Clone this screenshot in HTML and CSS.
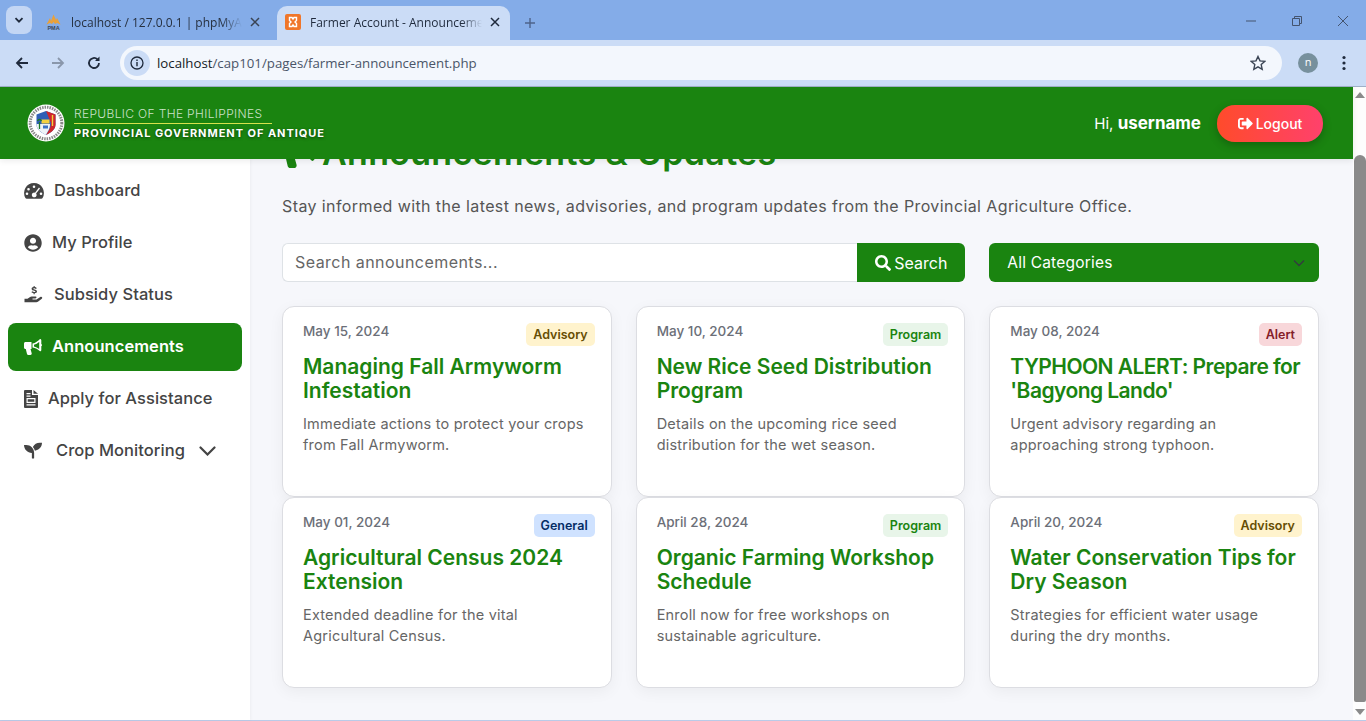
FILE: index.html
```html
<!DOCTYPE html>
<html lang="en">
<head>
  <meta charset="UTF-8">
  <title>Farmer Account - Announcements</title>
  <link rel="stylesheet" href="styles.css">
</head>
<body>
  <div class="browser">
    <div class="tabstrip">
      <button class="tab-menu"><svg width="12" height="12" viewBox="0 0 12 12"><path d="M2.500 4.200 6 7.700l3.500-3.500" fill="none" stroke="#1f2a3c" stroke-width="1.800"/></svg></button>
      <div class="tab">
        <svg class="favicon" width="17" height="16" viewBox="0 0 17 16"><path d="M1.500 10.500 5 4l1 3 2.500-6.500L11 6l1-2 3.500 6.500-3.500-1.500-2 1-1.500-2-1.500 2-2-1z" fill="#e9a13b"/><text x="8.500" y="15.500" text-anchor="middle" class="pma">PMA</text></svg>
        <span class="tab-title">localhost / 127.0.0.1 | phpMyAdmin</span>
        <svg class="tab-x" width="10" height="10" viewBox="0 0 10 10"><path d="m1 1 8 8M9 1 1 9" stroke="#3a4454" stroke-width="1.500"/></svg>
      </div>
      <div class="tab tab-active">
        <svg class="favicon" width="16" height="16" viewBox="0 0 16 16"><rect width="16" height="16" rx="2" fill="#f0762a"/><path d="M4.500 3.500h2.500l1 1.500 1-1.500h2.500v3l-1.500 1.500 1.500 1.500v3H9L8 11l-1 1.500H4.500v-3L6 8 4.500 6.500z" fill="none" stroke="#fff" stroke-width="1.400"/></svg>
        <span class="tab-title">Farmer Account - Announcements</span>
        <svg class="tab-x" width="10" height="10" viewBox="0 0 10 10"><path d="m1 1 8 8M9 1 1 9" stroke="#1f2a3c" stroke-width="1.500"/></svg>
      </div>
      <svg class="tab-new" width="12" height="12" viewBox="0 0 12 12"><path d="M6 1v10M1 6h10" stroke="#4d638a" stroke-width="1.400"/></svg>
      <div class="win-controls">
        <svg width="12" height="12" viewBox="0 0 12 12"><path d="M1 6h10" stroke="#44546e" stroke-width="1"/></svg>
        <svg width="12" height="12" viewBox="0 0 12 12"><path d="M1.500 3.500h7v7h-7zM3.500 3.500v-2h7v7h-2" fill="none" stroke="#44546e" stroke-width="1"/></svg>
        <svg width="12" height="12" viewBox="0 0 12 12"><path d="m1 1 10 10M11 1 1 11" stroke="#44546e" stroke-width="1"/></svg>
      </div>
    </div>
    <div class="toolbar">
      <svg class="tool" width="16" height="16" viewBox="0 0 16 16"><path d="M14 8H3M8 3 3 8l5 5" fill="none" stroke="#1f2a3c" stroke-width="1.800"/></svg>
      <svg class="tool" width="16" height="16" viewBox="0 0 16 16"><path d="M2 8h11M8 3l5 5-5 5" fill="none" stroke="#8a97ab" stroke-width="1.800"/></svg>
      <svg class="tool" width="16" height="16" viewBox="0 0 16 16"><path d="M13 8a5 5 0 1 1-1.500-3.600" fill="none" stroke="#1f2a3c" stroke-width="1.800"/><path d="M13.500 1.500v4.500H9z" fill="#1f2a3c"/></svg>
      <div class="omnibox">
        <span class="site-chip"><svg width="14" height="14" viewBox="0 0 14 14"><circle cx="7" cy="7" r="6" fill="none" stroke="#1f2a3c" stroke-width="1.300"/><path d="M7 6v4.300M7 3.500v1.500" stroke="#1f2a3c" stroke-width="1.400"/></svg></span>
        <span class="url"><b>localhost</b>/cap101/pages/farmer-announcement.php</span>
        <svg class="star" width="16" height="16" viewBox="0 0 16 16"><path d="m8 1.500 2 4.400 4.700.5-3.500 3.200 1 4.700L8 11.900l-4.200 2.400 1-4.700L1.300 6.400 6 5.900z" fill="none" stroke="#3a4454" stroke-width="1.400"/></svg>
      </div>
      <span class="avatar">n</span>
      <svg class="kebab" width="4" height="16" viewBox="0 0 4 16"><circle cx="2" cy="2.500" r="1.600" fill="#1f2a3c"/><circle cx="2" cy="8" r="1.600" fill="#1f2a3c"/><circle cx="2" cy="13.500" r="1.600" fill="#1f2a3c"/></svg>
    </div>
  </div>

  <div class="viewport">
    <div class="page">
      <header class="topbar">
        <svg class="seal" width="38" height="38" viewBox="0 0 38 38">
          <circle cx="19" cy="19" r="18.500" fill="#fff"/>
          <circle cx="19" cy="19" r="15.800" fill="none" stroke="#555" stroke-width="3" stroke-dasharray="1.500 1" opacity=".7"/>
          <path d="M9.500 10.500 19 7l9.500 3.500v10c0 5-4.500 8-9.500 10.500-5-2.500-9.500-5.500-9.500-10.500z" fill="#2f5fb5"/>
          <path d="M19 7l9.500 3.500v10c0 5-4.500 8-9.500 10.500 3-5 5-7 5-12z" fill="#d0262c"/>
          <path d="M9.500 20H23c0 5-2 7-4 11-5-2.500-9.500-5.500-9.500-11z" fill="#eef2f7"/>
          <path d="M14.500 15.500h8v4h-8z" fill="#f4d03f"/>
          <path d="M16 21.500h5v3h-5z" fill="#3b72c4"/>
          <path d="M12.500 18v7M10.500 17c1-2 3-2 4 0" stroke="#1e7a2a" stroke-width="1.300" fill="none"/>
          <path d="M25.500 11v11" stroke="#f4d03f" stroke-width="1.400"/>
        </svg>
        <div class="brand">
          <span class="brand-top">REPUBLIC OF THE PHILIPPINES</span>
          <span class="brand-bottom">PROVINCIAL GOVERNMENT OF ANTIQUE</span>
        </div>
        <div class="topbar-right">
          <span class="hello">Hi, <b>username</b></span>
          <a class="logout" href="#">
            <svg width="15" height="15" viewBox="0 0 512 512"><path fill="#fff" d="M497 273 329 441c-15 15-41 4.500-41-17v-96H152c-13.300 0-24-10.700-24-24v-96c0-13.300 10.700-24 24-24h136V88c0-21.400 25.900-32 41-17l168 168c9.300 9.400 9.300 24.600 0 34zM192 436v-40c0-6.600-5.400-12-12-12H96c-17.700 0-32-14.300-32-32V160c0-17.700 14.300-32 32-32h84c6.600 0 12-5.400 12-12V76c0-6.600-5.400-12-12-12H96c-53 0-96 43-96 96v192c0 53 43 96 96 96h84c6.600 0 12-5.400 12-12z"/></svg>
            Logout
          </a>
        </div>
      </header>

      <div class="layout">
        <nav class="sidebar">
          <a class="nav-item" href="#">
            <svg class="nav-icon w20" viewBox="0 0 20 18"><path fill-rule="evenodd" d="M10 1a10 10 0 0 0-8.600 15c.3.500.8.700 1.300.7h14.600c.5 0 1-.2 1.300-.7A10 10 0 0 0 10 1zm0 2.500a1.300 1.300 0 1 1 0 2.600 1.300 1.300 0 0 1 0-2.600zM4.500 6a1.300 1.300 0 1 1 0 2.600 1.300 1.300 0 0 1 0-2.600zM3 10.500a1.300 1.300 0 1 1 0 2.600 1.300 1.300 0 0 1 0-2.600zm14 0a1.300 1.300 0 1 1 0 2.600 1.300 1.300 0 0 1 0-2.600zM15 5.600l1 .8-3.900 5.100a2.400 2.400 0 1 1-1.100-.8z"/></svg>
            <span>Dashboard</span>
          </a>
          <a class="nav-item" href="#">
            <svg class="nav-icon w18" viewBox="0 0 496 512"><path d="M248 8C111 8 0 119 0 256s111 248 248 248 248-111 248-248S385 8 248 8zm0 96c48.600 0 88 39.400 88 88s-39.400 88-88 88-88-39.400-88-88 39.400-88 88-88zm0 344c-58.700 0-111.300-26.600-146.500-68.200 18.800-35.400 55.600-59.800 98.500-59.800 2.400 0 4.800.4 7.100 1.100 13 4.200 26.600 6.900 40.900 6.900 14.300 0 28-2.700 40.900-6.900 2.300-.7 4.700-1.100 7.100-1.100 42.900 0 79.700 24.400 98.500 59.800C359.300 421.400 306.700 448 248 448z"/></svg>
            <span>My Profile</span>
          </a>
          <a class="nav-item" href="#">
            <svg class="nav-icon w20" viewBox="0 0 20 18"><path d="M.5 12.800h3l2.200-1.600c.6-.4 1.300-.7 2-.7h4c1 0 1.300 1.700-.4 2H8.500v.9h4l3.800-2.500c1.400-.8 2.700.7 1.500 1.800l-3.900 3c-.4.300-1 .5-1.500.5H.5z"/><path d="M10.700 0v1.100c1 .1 1.700.5 2.100 1.100l-1 .7c-.4-.5-1-.7-1.600-.7-.6 0-1 .2-1 .5 0 .9 3.800.5 3.800 2.800 0 1-.9 1.600-2.300 1.700v1.100H9.600V7.200c-1-.1-1.800-.6-2.200-1.200l1-.7c.4.500 1 .8 1.800.8.700 0 1.200-.2 1.200-.6 0-1-3.800-.5-3.800-2.800 0-.9.800-1.500 2-1.600V0z"/></svg>
            <span>Subsidy Status</span>
          </a>
          <a class="nav-item nav-active" href="#">
            <svg class="nav-icon w18" viewBox="0 0 18 16"><path d="M16 0c.8 0 1.300.6 1.300 1.300v3.600c.5.300.7.700.7 1.200s-.2.900-.7 1.200v3.600c0 .7-.5 1.300-1.300 1.300-2-1.800-4.500-3.500-7.500-3.700v-4C11.500 4.300 14 1.800 16 0zm-.8 3c-1.500 1.200-3.400 2.300-5.200 2.700v1.700c1.800.4 3.700 1.500 5.200 2.700z"/><path d="M0 4.500C0 3.700.7 3 1.500 3h6v7h-1l1.200 4.300c.2.800-.4 1.700-1.300 1.700H4.300c-.6 0-1.100-.4-1.300-1L1.800 10h-.3C.7 10 0 9.300 0 8.500z"/></svg>
            <span>Announcements</span>
          </a>
          <a class="nav-item" href="#">
            <svg class="nav-icon w14" viewBox="0 0 14 18"><path fill-rule="evenodd" d="M1 0h7v5h6v12a1 1 0 0 1-1 1H1a1 1 0 0 1-1-1V1a1 1 0 0 1 1-1zm1.500 3v1.200h4V3zm0 2.500v1.200h4V5.500zM2.500 8v5h9V8zm1.200 1.200h6.600v2.600H3.700zm-1.200 5v1.200h9v-1.200z"/><path d="M9.500 0 14 3.800H9.500z"/></svg>
            <span>Apply for Assistance</span>
          </a>
          <a class="nav-item nav-crop" href="#">
            <svg class="nav-icon w18" viewBox="0 32 512 464"><path d="M64 96H0c0 123.700 100.300 224 224 224v144c0 8.800 7.200 16 16 16h32c8.800 0 16-7.200 16-16V320C288 196.300 187.700 96 64 96zm384-64c-84.200 0-157.400 46.500-195.700 115.200 27.700 30.200 48.200 66.900 59 107.600C424 243.100 512 147.900 512 32h-64z"/></svg>
            <span>Crop Monitoring</span>
            <svg class="nav-chevron" width="17" height="10" viewBox="0 0 17 10"><path d="m1.500 1.500 7 7 7-7" fill="none" stroke="#444" stroke-width="2.200" stroke-linecap="round"/></svg>
          </a>
        </nav>

        <main class="content">
          <h1 class="page-title">
            <svg width="34" height="30" viewBox="0 0 18 16"><path d="M16 0c.8 0 1.300.6 1.300 1.300v3.600c.5.300.7.700.7 1.200s-.2.900-.7 1.200v3.600c0 .7-.5 1.300-1.300 1.300-2-1.800-4.500-3.500-7.500-3.700v-4C11.500 4.300 14 1.800 16 0z"/><path d="M0 4.500C0 3.700.7 3 1.500 3h6v7h-1l1.200 4.300c.2.800-.4 1.700-1.300 1.700H4.300c-.6 0-1.100-.4-1.300-1L1.800 10h-.3C.7 10 0 9.300 0 8.500z"/></svg>
            Announcements &amp; Updates
          </h1>
          <p class="lead">Stay informed with the latest news, advisories, and program updates from the Provincial Agriculture Office.</p>

          <div class="filters">
            <form class="search">
              <input type="text" placeholder="Search announcements...">
              <button type="button">
                <svg width="16" height="16" viewBox="0 0 512 512"><path fill="#fff" d="M505 442.700 405.300 343c-4.500-4.500-10.600-7-17-7H372c27.600-35.300 44-79.700 44-128C416 93.100 322.900 0 208 0S0 93.100 0 208s93.100 208 208 208c48.300 0 92.700-16.400 128-44v16.300c0 6.400 2.500 12.500 7 17l99.700 99.700c9.400 9.400 24.600 9.400 33.900 0l28.300-28.300c9.400-9.400 9.400-24.600.1-34zM208 336c-70.700 0-128-57.200-128-128 0-70.700 57.200-128 128-128 70.700 0 128 57.200 128 128 0 70.700-57.200 128-128 128z"/></svg>
                Search
              </button>
            </form>
            <div class="category-wrap">
              <select class="category">
                <option>All Categories</option>
              </select>
              <svg class="category-arrow" width="12" height="8" viewBox="0 0 12 8"><path d="m1 1.500 5 5 5-5" fill="none" stroke="#343a40" stroke-width="1.300"/></svg>
            </div>
          </div>

          <div class="cards">
            <article class="card">
              <span class="badge badge-advisory">Advisory</span>
              <div class="card-date">May 15, 2024</div>
              <h3>Managing Fall Armyworm Infestation</h3>
              <p>Immediate actions to protect your crops from Fall Armyworm.</p>
            </article>
            <article class="card">
              <span class="badge badge-program">Program</span>
              <div class="card-date">May 10, 2024</div>
              <h3>New Rice Seed Distribution Program</h3>
              <p>Details on the upcoming rice seed distribution for the wet season.</p>
            </article>
            <article class="card">
              <span class="badge badge-alert">Alert</span>
              <div class="card-date">May 08, 2024</div>
              <h3 class="title-caps">TYPHOON ALERT: Prepare for 'Bagyong Lando'</h3>
              <p>Urgent advisory regarding an approaching strong typhoon.</p>
            </article>
            <article class="card">
              <span class="badge badge-general">General</span>
              <div class="card-date">May 01, 2024</div>
              <h3>Agricultural Census 2024 Extension</h3>
              <p>Extended deadline for the vital Agricultural Census.</p>
            </article>
            <article class="card">
              <span class="badge badge-program">Program</span>
              <div class="card-date">April 28, 2024</div>
              <h3>Organic Farming Workshop Schedule</h3>
              <p>Enroll now for free workshops on sustainable agriculture.</p>
            </article>
            <article class="card">
              <span class="badge badge-advisory">Advisory</span>
              <div class="card-date">April 20, 2024</div>
              <h3>Water Conservation Tips for Dry Season</h3>
              <p>Strategies for efficient water usage during the dry months.</p>
            </article>
          </div>
        </main>
      </div>
    </div>
    <div class="scrollbar">
      <span class="arrow-up"></span>
      <div class="thumb"></div>
      <span class="arrow-down"></span>
    </div>
  </div>
</body>
</html>
```

FILE: styles.css
```css
* {
  box-sizing: border-box;
}
html, body {
  height: 100%;
}
body {
  margin: 0;
  overflow: hidden;
  font-family: 'Inter', Arial, sans-serif;
  color: #444;
  background: #f6f7fb;
  display: flex;
  flex-direction: column;
}

/* browser chrome */
.browser {
  flex: none;
  height: 87px;
  background: #cbdcf6;
  border-bottom: 1px solid #9fb0c8;
  font-family: 'Open Sans', Arial, sans-serif;
}
.tabstrip {
  height: 40px;
  background: #84ace8;
  display: flex;
  align-items: flex-end;
  padding-left: 6px;
}
.tab-menu {
  width: 26px;
  height: 28px;
  margin-bottom: 6px;
  border: none;
  border-radius: 8px;
  background: #c3d6f4;
  display: flex;
  align-items: center;
  justify-content: center;
  padding: 0;
}
.tab {
  width: 233px;
  height: 34px;
  display: flex;
  align-items: center;
  padding: 0 10px 2px 8px;
  font-size: 12px;
  color: #26303f;
}
.tab:first-of-type {
  margin-left: 5px;
}
.tab-active {
  margin-left: 7px;
  background: #cbdcf6;
  border-radius: 10px 10px 0 0;
  color: #1f2a3c;
}
.favicon {
  flex: none;
  margin-right: 9px;
}
.pma {
  font-family: 'Liberation Sans', Arial, sans-serif;
  font-size: 5.500px;
  font-weight: 700;
  fill: #3b4658;
}
.tab-title {
  flex: 1;
  white-space: nowrap;
  overflow: hidden;
  -webkit-mask-image: linear-gradient(90deg, #000 88%, transparent);
  mask-image: linear-gradient(90deg, #000 88%, transparent);
}
.tab-x {
  flex: none;
  margin-left: 8px;
}
.tab-new {
  margin: 0 0 11px 14px;
}
.win-controls {
  margin-left: auto;
  display: flex;
  gap: 34px;
  padding: 0 17px 13px 0;
}
.toolbar {
  height: 46px;
  display: flex;
  align-items: center;
  padding: 0 0 0 14px;
  border-radius: 10px 10px 0 0;
}
.tool {
  flex: none;
  margin-right: 20px;
}
.tool:nth-child(3) {
  margin-right: 18px;
}
.omnibox {
  width: 1162px;
  height: 34px;
  background: #f3f7fd;
  border-radius: 17px;
  display: flex;
  align-items: center;
  padding: 0 16px 0 4px;
}
.site-chip {
  width: 26px;
  height: 26px;
  border-radius: 50%;
  background: #cbdcf6;
  display: flex;
  align-items: center;
  justify-content: center;
  margin-right: 7px;
}
.url {
  flex: 1;
  font-size: 13.250px;
  color: #4a5568;
}
.url b {
  font-weight: 400;
  color: #141b26;
}
.avatar {
  flex: none;
  width: 20px;
  height: 20px;
  margin-left: 16px;
  border-radius: 50%;
  background: #77909d;
  color: #fff;
  font-size: 11px;
  line-height: 18px;
  text-align: center;
}
.kebab {
  margin-left: 24px;
}

/* page */
.viewport {
  flex: 1;
  min-height: 0;
  display: flex;
  border-bottom: 1px solid #b9cbe8;
}
.page {
  flex: 1;
  min-width: 0;
  display: flex;
  flex-direction: column;
}
.topbar {
  flex: none;
  position: relative;
  z-index: 2;
  height: 72px;
  background: #1a8410;
  display: flex;
  align-items: center;
  padding: 0 30px 0 27px;
  box-shadow: 0 2px 6px rgba(0,0,0,0.08);
  color: #fff;
}
.seal {
  flex: none;
  margin-right: 9px;
}
.brand {
  display: flex;
  flex-direction: column;
}
.brand-top {
  font-size: 12px;
  font-weight: 300;
  letter-spacing: 0.35px;
  line-height: 17px;
  padding-bottom: 1px;
  border-bottom: 1px solid #d7e24b;
  color: rgba(255,255,255,0.78);
  margin-right: 53px;
}
.brand-bottom {
  font-size: 11px;
  font-weight: 700;
  letter-spacing: 0.96px;
  line-height: 18px;
  text-shadow: 0 1px 3px rgba(0,0,0,0.5);
}
.topbar-right {
  margin-left: auto;
  display: flex;
  align-items: center;
  gap: 16px;
}
.hello {
  font-size: 15px;
}
.hello b {
  font-weight: 700;
  font-size: 17px;
}
.logout {
  width: 106px;
  height: 37px;
  border-radius: 18px;
  background: linear-gradient(90deg, #ff4b2b, #ff416c);
  box-shadow: 0 3px 8px rgba(0,0,0,0.25);
  color: #fff;
  font-size: 14px;
  font-weight: 500;
  text-decoration: none;
  display: flex;
  align-items: center;
  justify-content: center;
  gap: 3px;
}
.layout {
  flex: 1;
  min-height: 0;
  display: flex;
}
.sidebar {
  flex: none;
  width: 250px;
  background: #fff;
  padding: 8px;
  display: flex;
  flex-direction: column;
  gap: 4px;
  box-shadow: 1px 0 3px rgba(0,0,0,0.04);
}
.nav-item {
  height: 48px;
  padding: 0 16px;
  border-radius: 8px;
  display: flex;
  align-items: center;
  gap: 10px;
  color: #444;
  font-size: 16.500px;
  font-weight: 500;
  letter-spacing: 0.05px;
  text-decoration: none;
}
.nav-item span {
  margin-top: -2px;
}
.nav-icon {
  flex: none;
  height: 18px;
  fill: #444;
}
.w20 { width: 20px; }
.w18 { width: 18px; }
.w14 { width: 14px; }
.nav-active {
  background: #1a8410;
  color: #fff;
  font-weight: 600;
}
.nav-active .nav-icon {
  fill: #fff;
}
.nav-crop {
  gap: 14px;
}
.content {
  flex: 1;
  min-width: 0;
  overflow: hidden;
  padding: 0 34px 0 32px;
}
.page-title {
  margin: -30px 0 0 0;
  height: 48px;
  display: flex;
  align-items: center;
  gap: 6px;
  color: #1a8410;
  fill: #1a8410;
  font-size: 34px;
  font-weight: 600;
  line-height: 48px;
  letter-spacing: 0.3px;
  white-space: nowrap;
}
.lead {
  margin: 16px 0 0;
  font-size: 16px;
  line-height: 26px;
  color: #555;
  letter-spacing: 0.4px;
}
.filters {
  margin-top: 24px;
  display: grid;
  grid-template-columns: repeat(3, 1fr);
  column-gap: 24px;
}
.search {
  grid-column: span 2;
  display: flex;
  margin: 0;
}
.search input {
  flex: 1;
  min-width: 0;
  height: 39px;
  padding: 0 12px 1px;
  border: 1px solid #dee2e6;
  border-right: none;
  border-radius: 6px 0 0 6px;
  background: #fff;
  font-family: inherit;
  font-size: 16px;
  letter-spacing: 0.45px;
  outline: none;
}
.search input::placeholder {
  color: #666;
}
.search button {
  flex: none;
  width: 108px;
  height: 39px;
  padding-bottom: 1px;
  border: none;
  border-radius: 0 6px 6px 0;
  background: #1a8410;
  color: #fff;
  font-family: inherit;
  font-size: 16px;
  display: flex;
  align-items: center;
  justify-content: center;
  gap: 3px;
}
.category-wrap {
  position: relative;
}
.category {
  width: 100%;
  height: 39px;
  padding: 0 18px 1px;
  border: none;
  border-radius: 6px;
  background-color: #1a8410;
  color: #fff;
  font-family: inherit;
  font-size: 15.500px;
  letter-spacing: 0.2px;
  outline: none;
  appearance: none;
  -webkit-appearance: none;
}
.category-arrow {
  position: absolute;
  top: 16px;
  right: 14px;
}
.cards {
  margin-top: 24px;
  display: grid;
  grid-template-columns: repeat(3, 1fr);
  grid-auto-rows: 191px;
  column-gap: 24px;
}
.card {
  position: relative;
  background: #fff;
  border: 1px solid #dcdde2;
  border-radius: 12px;
  padding: 15px 20px;
  box-shadow: 0 4px 15px rgba(0,0,0,0.05);
}
.card-date {
  font-size: 13.500px;
  font-weight: 500;
  line-height: 18px;
  color: #6c6f78;
}
.card h3 {
  margin: 15px -10px 0 0;
  font-size: 21px;
  font-weight: 600;
  line-height: 24px;
  color: #1a8410;
}
.card h3.title-caps {
  letter-spacing: -0.55px;
}
.card p {
  margin: 10px 0 0;
  font-size: 14.500px;
  line-height: 21px;
  color: #666;
  letter-spacing: 0.2px;
}
.badge {
  position: absolute;
  top: 16px;
  right: 16px;
  height: 23px;
  padding: 0 7px;
  border-radius: 5px;
  font-size: 12.500px;
  font-weight: 600;
  line-height: 23px;
}
.badge-advisory {
  background: #fff3cd;
  color: #664d03;
}
.badge-program {
  background: #e8f5e9;
  color: #1a8410;
}
.badge-alert {
  background: #f8d7da;
  color: #842029;
}
.badge-general {
  background: #cfe2ff;
  color: #052c65;
}

/* scrollbar */
.scrollbar {
  flex: none;
  width: 13px;
  background: #fdfdfd;
  display: flex;
  flex-direction: column;
  align-items: flex-end;
  padding-top: 5px;
}
.arrow-up {
  flex: none;
  margin-right: 1px;
  border: 5.500px solid transparent;
  border-top: none;
  border-bottom: 6px solid #8a8a8a;
}
.thumb {
  flex: none;
  width: 12px;
  height: 547px;
  margin-top: 57px;
  border-radius: 6px 6px 2px 2px;
  background: #8a8a8a;
}
.arrow-down {
  flex: none;
  margin: 7px 1px 0 0;
  border: 5.500px solid transparent;
  border-bottom: none;
  border-top: 6px solid #8a8a8a;
}
```
